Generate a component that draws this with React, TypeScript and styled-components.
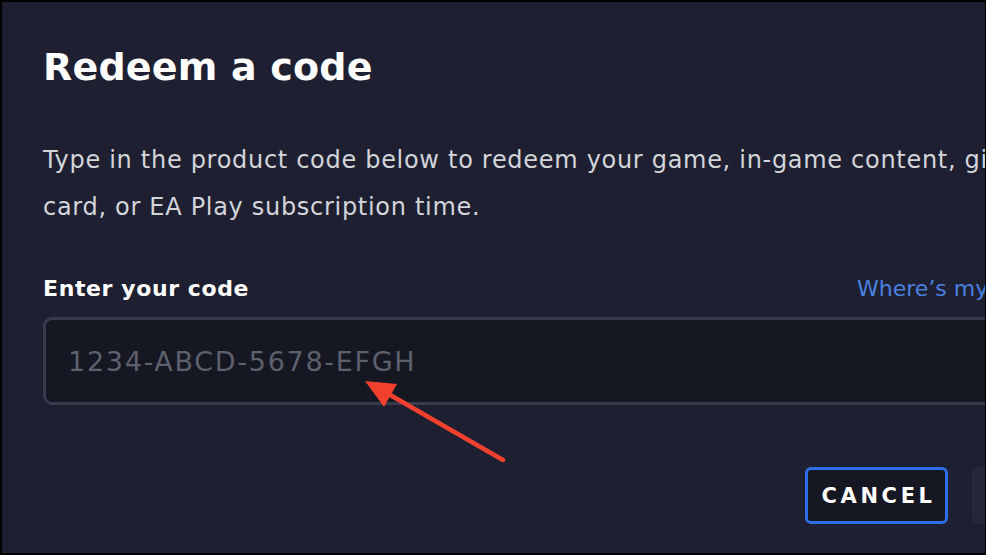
import React from "react";
import styled, { createGlobalStyle } from "styled-components";

const Global = createGlobalStyle`
  html, body { margin: 0; padding: 0; background: #000; overflow: hidden; }
  body { width: 986px; height: 555px; font-family: "DejaVu Sans", sans-serif; }
  #root { width: 986px; height: 555px; }
`;

const Screen = styled.div`
  width: 986px;
  height: 555px;
  box-sizing: border-box;
  padding: 2px 1px 2px 2px;
  background: #000;
`;

const Dialog = styled.div`
  position: relative;
  height: 100%;
  background: #1e2032;
  overflow: hidden;
`;

const Content = styled.div`
  width: 1017px;
  padding: 42px 0 0 41px;
  display: flex;
  flex-direction: column;
`;

const Title = styled.h1`
  margin: 0;
  font-family: "DejaVu Sans", sans-serif;
  font-size: 38px;
  line-height: 46px;
  font-weight: 700;
  color: #ffffff;
  letter-spacing: 0.2px;
`;

const Body = styled.p`
  margin: 47px 0 0;
  font-size: 24px;
  line-height: 47px;
  font-weight: 400;
  letter-spacing: 0.7px;
  color: #d3d5db;
`;

const LabelRow = styled.div`
  margin-top: 44px;
  display: flex;
  justify-content: space-between;
  align-items: baseline;
`;

const Label = styled.label`
  font-size: 22px;
  line-height: 28px;
  font-weight: 700;
  letter-spacing: 0.6px;
  color: #ffffff;
`;

const Link = styled.a`
  font-size: 22px;
  line-height: 28px;
  color: #4b80e0;
  text-decoration: none;
`;

const Input = styled.input`
  margin-top: 14px;
  box-sizing: border-box;
  height: 88px;
  width: 100%;
  padding: 0 22px;
  border: 3px solid #383b4c;
  border-radius: 9px;
  background: #151722;
  font-family: "DejaVu Sans", sans-serif;
  font-size: 27px;
  letter-spacing: 1.7px;
  color: #ffffff;
  outline: none;
  &::placeholder { color: #5d606d; }
`;

const Footer = styled.div`
  margin-top: 62px;
  display: flex;
  justify-content: flex-end;
  gap: 24px;
`;

const Button = styled.button<{ $variant: "outline" | "solid" }>`
  box-sizing: border-box;
  height: 57px;
  padding: ${(p) => (p.$variant === "outline" ? "0 9px 0 14px" : "0 10px")};
  border-radius: 6px;
  border: 3px solid ${(p) => (p.$variant === "outline" ? "#2f6de6" : "#25273a")};
  background: ${(p) => (p.$variant === "outline" ? "#151722" : "#25273a")};
  color: ${(p) => (p.$variant === "outline" ? "#ffffff" : "#6a6d7a")};
  font-family: "DejaVu Sans", sans-serif;
  font-size: 21px;
  font-weight: 700;
  letter-spacing: ${(p) => (p.$variant === "outline" ? "3.6px" : "0")};
`;

const Arrow = styled.svg`
  position: absolute;
  left: 0;
  top: 0;
  pointer-events: none;
`;

export default function App() {
  return (
    <>
      <Global />
      <Screen>
        <Dialog>
          <Content>
            <Title>Redeem a code</Title>
            <Body>
              Type in the product code below to redeem your game, in-game content, gift card, or EA
              Play subscription time.
            </Body>
            <LabelRow>
              <Label htmlFor="code">Enter your code</Label>
              <Link href="#">Where’s my code?</Link>
            </LabelRow>
            <Input id="code" placeholder="1234-ABCD-5678-EFGH" />
            <Footer>
              <Button $variant="outline">CANCEL</Button>
              <Button $variant="solid">NEXT</Button>
            </Footer>
          </Content>
          <Arrow width="984" height="551" viewBox="2 2 984 551">
            <line x1="503" y1="460" x2="385" y2="392" stroke="#f2402f" strokeWidth="4.5" strokeLinecap="round" />
            <polygon points="365,381 397,384 384,407" fill="#f2402f" />
          </Arrow>
        </Dialog>
      </Screen>
    </>
  );
}
